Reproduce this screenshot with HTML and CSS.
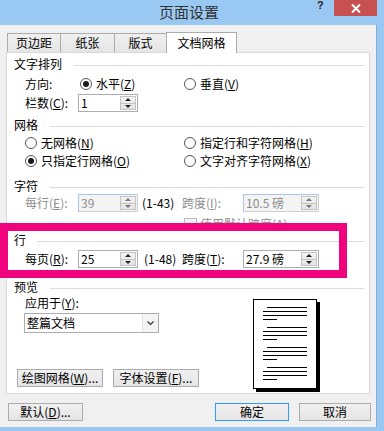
FILE: index.html
```html
<!DOCTYPE html>
<html lang="zh-CN">
  <head>
    <meta charset="UTF-8" />
    <title>页面设置</title>
    <link rel="stylesheet" href="styles.css">
  </head>
  <body>
    <div class="window">
      <div class="titlebar">
        <div class="title">页面设置</div>
        <div class="help">?</div>
        <div class="close">
          <svg width="10" height="9" viewBox="0 0 10 9"><path d="M1 0.5 L9 8.5 M9 0.5 L1 8.5" stroke="#fff" stroke-width="2" fill="none"/></svg>
        </div>
      </div>

      <div class="client">
        <div class="tabs">
          <div class="tab t1">页边距</div>
          <div class="tab t2">纸张</div>
          <div class="tab t3">版式</div>
          <div class="tab t4 active">文档网格</div>
        </div>

        <div class="panel">
          <div class="group g-text"><span>文字排列</span><i class="rule"></i></div>
          <div class="row r-dir">
            <div class="left">
              <span class="lbl lbl-wide">方向:</span>
              <span class="radio on"></span><span>水平(<u>Z</u>)</span>
            </div>
            <div class="right">
              <span class="radio"></span><span>垂直(<u>V</u>)</span>
            </div>
          </div>
          <div class="row r-cols spin-row">
            <div class="left">
              <span class="lbl">栏数(<u>C</u>):</span>
              <div class="spin"><span class="val">1</span><span class="btns"><i class="up"></i><i class="down"></i></span></div>
            </div>
          </div>

          <div class="group g-grid"><span>网格</span><i class="rule"></i></div>
          <div class="row r-grid1">
            <div class="left">
              <span class="radio"></span><span>无网格(<u>N</u>)</span>
            </div>
            <div class="right">
              <span class="radio"></span><span>指定行和字符网格(<u>H</u>)</span>
            </div>
          </div>
          <div class="row r-grid2">
            <div class="left">
              <span class="radio on"></span><span>只指定行网格(<u>O</u>)</span>
            </div>
            <div class="right">
              <span class="radio"></span><span>文字对齐字符网格(<u>X</u>)</span>
            </div>
          </div>

          <div class="group g-char"><span>字符</span><i class="rule"></i></div>
          <div class="row r-char spin-row">
            <div class="left">
              <span class="lbl dim">每行(<u>E</u>):</span>
              <div class="spin off"><span class="val">39</span><span class="btns"><i class="up"></i><i class="down"></i></span></div>
              <span class="range">(1-43)</span>
            </div>
            <div class="right">
              <span class="lbl2 dim">跨度(<u>I</u>):</span>
              <div class="spin wide off"><span class="val">10.5 磅</span><span class="btns"><i class="up"></i><i class="down"></i></span></div>
            </div>
          </div>
          <div class="row r-check">
            <div class="left"></div>
            <div class="right">
              <span class="check"></span><span class="dim">使用默认跨度(<u>A</u>)</span>
            </div>
          </div>

          <div class="group g-line"><span>行</span><i class="rule"></i></div>
          <div class="row r-line spin-row">
            <div class="left">
              <span class="lbl">每页(<u>R</u>):</span>
              <div class="spin"><span class="val">25</span><span class="btns"><i class="up"></i><i class="down"></i></span></div>
              <span class="range range2">(1-48)</span>
            </div>
            <div class="right">
              <span class="lbl2">跨度(<u>T</u>):</span>
              <div class="spin wide"><span class="val">27.9 磅</span><span class="btns"><i class="up"></i><i class="down"></i></span></div>
            </div>
          </div>

          <div class="group g-preview"><span>预览</span><i class="rule"></i></div>
          <div class="preview">
            <div class="preview-left">
              <div class="apply">应用于(<u>Y</u>):</div>
              <div class="combo">
                <span class="combo-val">整篇文档</span>
                <span class="combo-btn">
                  <svg width="7" height="5" viewBox="0 0 7 5"><path d="M0.5 0.5 L3.5 3.5 L6.5 0.5" stroke="#333" stroke-width="1.2" fill="none"/></svg>
                </span>
              </div>
              <div class="panel-buttons">
                <div class="btn btn-grid">绘图网格(<u>W</u>)...</div>
                <div class="btn btn-font">字体设置(<u>F</u>)...</div>
              </div>
            </div>
            <div class="page">
              <svg width="64" height="90" viewBox="0 0 64 90">
                <g stroke="#000" stroke-width="1">
                  <path d="M14 8.5H54M10 12.5H54M10 16.5H54M10 20.5H24"/>
                  <path d="M14 28.5H54M10 32.5H54M10 36.5H54M10 40.5H24"/>
                  <path d="M14 48.5H54M10 52.5H54M10 56.5H54M10 60.5H24"/>
                  <path d="M14 68.5H54M10 72.5H54M10 76.5H54M10 80.5H24"/>
                </g>
              </svg>
            </div>
          </div>
        </div>

        <div class="footer">
          <div class="btn btn-default">默认(<u>D</u>)...</div>
          <div class="footer-space"></div>
          <div class="btn btn-ok">确定</div>
          <div class="btn btn-cancel">取消</div>
        </div>
      </div>

      <div class="highlight"></div>
    </div>
  </body>
</html>
```

FILE: styles.css
```css
body {
  margin: 0;
  font-family: "Noto Sans CJK SC", "Liberation Sans", sans-serif;
  font-size: 12px;
  color: #000;
}
u {
  text-decoration: underline;
  text-underline-offset: 1px;
}
.window {
  width: 384px;
  height: 431px;
  background-color: #99c9f3;
  position: relative;
  overflow: hidden;
}

/* title bar */
.titlebar {
  height: 25px;
  position: relative;
}
.title {
  text-align: center;
  font-size: 15px;
  line-height: 23px;
  color: #333;
  padding-right: 6px;
}
.help {
  position: absolute;
  left: 317px;
  top: 0;
  font-family: "Liberation Sans", sans-serif;
  font-weight: bold;
  font-size: 11px;
  line-height: 11px;
  color: #222;
}
.close {
  position: absolute;
  left: 334px;
  top: 0;
  width: 43px;
  height: 16px;
  background-color: #c75050;
  display: flex;
  justify-content: center;
  align-items: center;
}

/* client area */
.client {
  width: 376px;
  height: 402px;
  background-color: #f0f0f0;
  border-right: 1px solid #7fb1dd;
}
.tabs {
  display: flex;
  padding: 8px 0 0 7px;
  height: 19px;
}
.tab {
  box-sizing: border-box;
  height: 19px;
  border: 1px solid #acacac;
  border-bottom: none;
  margin-right: -1px;
  background: linear-gradient(#f0f0f0, #e5e5e5);
  text-align: center;
  line-height: 18px;
}
.t1 { width: 54px; }
.t2 { width: 55px; }
.t3 { width: 53px; }
.t4 { width: 71px; }
.tab.active {
  background: #fff;
  height: 21px;
  margin-top: -1px;
  position: relative;
  z-index: 1;
  line-height: 20px;
}

.panel {
  box-sizing: border-box;
  margin-left: 6px;
  width: 364px;
  height: 342px;
  border: 1px solid #d9d9d9;
  background-color: #fff;
}

/* group headers */
.group {
  display: flex;
  align-items: center;
  height: 16px;
  line-height: 16px;
  padding: 0 5px 0 7px;
}
.rule {
  flex: 1;
  height: 1px;
  margin: 3px 0 0 12px;
  background-color: #dcdcdc;
}
.g-text { margin-top: 3px; }
.g-grid { margin-top: 5px; }
.g-char { margin-top: 9px; }
.g-line .rule { margin-left: 11px; }
.g-preview { margin-top: 11px; }

/* rows */
.row {
  display: flex;
  height: 16px;
  line-height: 16px;
  padding-left: 18px;
}
.spin-row {
  height: 18px;
  line-height: 18px;
}
.left {
  width: 157px;
  display: flex;
  align-items: center;
}
.right {
  display: flex;
  align-items: center;
  padding-left: 2px;
}
.r-dir { margin-top: 4px; }
.r-cols { margin-top: 2px; }
.r-grid1 { margin-top: 2px; }
.r-grid2 { margin-top: 2px; }
.r-check { margin-top: 4px; }
.r-line { margin-top: 2px; }

.lbl { width: 53px; }
.lbl-wide { width: 55px; }
.lbl2 { width: 61px; margin-left: -2px; }
.dim { color: #8d8d8d; }
.range { margin-left: 4px; }
.range2 { margin-left: 6px; }

/* radios and checks */
.radio {
  box-sizing: border-box;
  width: 12px;
  height: 12px;
  border: 1px solid #555;
  border-radius: 50%;
  background: #fff;
  margin-right: 4px;
  display: flex;
  justify-content: center;
  align-items: center;
}
.radio.on::after {
  content: "";
  width: 6px;
  height: 6px;
  border-radius: 50%;
  background-color: #1a1a1a;
}
.check {
  box-sizing: border-box;
  width: 13px;
  height: 13px;
  border: 1px solid #bcbcbc;
  background-color: #f4f4f4;
  margin-right: 3px;
}

/* spin boxes */
.spin {
  box-sizing: border-box;
  width: 60px;
  height: 18px;
  border: 1px solid #abadb3;
  background-color: #fff;
  display: flex;
}
.spin.wide { width: 76px; }
.spin .val {
  flex: 1;
  padding-left: 2px;
  line-height: 16px;
}
.spin.off {
  background-color: #f4f4f4;
  border-color: #a9c6e6 #cfcfcf #cfcfcf #a9c6e6;
  color: #8d8d8d;
}
.btns {
  box-sizing: border-box;
  width: 16px;
  margin: 1px;
  border: 1px solid #c4c4c4;
  background: linear-gradient(#f3f3f3, #e3e3e3);
  display: flex;
  flex-direction: column;
}
.btns i {
  flex: 1;
  display: flex;
  justify-content: center;
  align-items: center;
}
.btns i.up { border-bottom: 1px solid #c4c4c4; }
.btns i::after {
  content: "";
  border-left: 3px solid transparent;
  border-right: 3px solid transparent;
}
.btns i.up::after { border-bottom: 3px solid #222; }
.btns i.down::after { border-top: 3px solid #222; }
.spin.off .btns i.up::after { border-bottom-color: #777; }
.spin.off .btns i.down::after { border-top-color: #777; }

/* preview */
.preview {
  display: flex;
}
.preview-left {
  width: 246px;
}
.apply {
  padding-left: 18px;
  line-height: 16px;
}
.combo {
  box-sizing: border-box;
  margin: 2px 0 0 17px;
  width: 135px;
  height: 20px;
  border: 1px solid #abadb3;
  display: flex;
}
.combo-val {
  flex: 1;
  padding-left: 2px;
  line-height: 18px;
}
.combo-btn {
  width: 15px;
  border-left: 1px solid #e2e2e2;
  background-color: #f4f4f4;
  display: flex;
  justify-content: center;
  align-items: center;
}
.panel-buttons {
  display: flex;
  margin: 36px 0 0 10px;
  gap: 10px;
}
.page {
  box-sizing: border-box;
  width: 64px;
  height: 90px;
  margin-top: 4px;
  background: #fff;
  outline: 1px solid #000;
  outline-offset: -1px;
  box-shadow: 3px 3px 0 #000;
}
.page svg { display: block; }

/* buttons */
.btn {
  box-sizing: border-box;
  height: 18px;
  border: 1px solid #acacac;
  background: linear-gradient(#f0f0f0, #e5e5e5);
  text-align: center;
  line-height: 16px;
}
.btn-grid, .btn-font { width: 86px; }
.footer {
  display: flex;
  margin-top: 9px;
  padding: 0 5px 0 8px;
}
.footer-space { flex: 1; }
.btn-default { width: 75px; }
.btn-ok {
  width: 74px;
  border-color: #3399ff;
  margin-right: 10px;
}
.btn-cancel { width: 72px; }

/* magenta annotation frame */
.highlight {
  position: absolute;
  left: 0;
  top: 223px;
  width: 347px;
  height: 55px;
  box-sizing: border-box;
  border: 8px solid #ef047e;
}
```
